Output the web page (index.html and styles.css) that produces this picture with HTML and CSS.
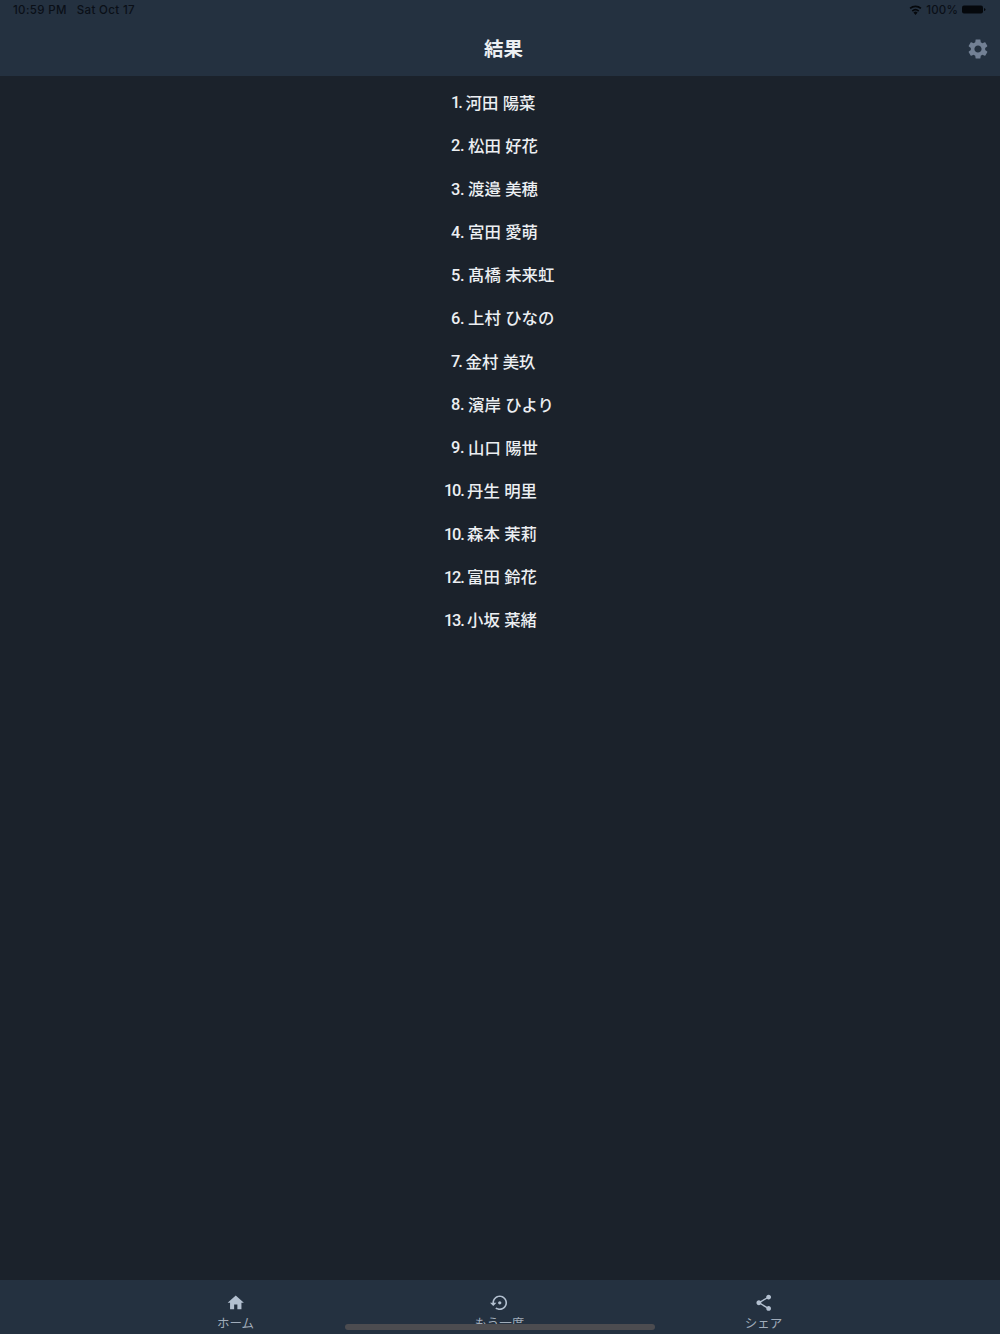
FILE: index.html
```
<!DOCTYPE html>
<html lang="ja">
<head>
<meta charset="utf-8">
<title>結果</title>
<link rel="stylesheet" href="styles.css">
</head>
<body>
<div class="app">
  <header class="header">
    <div class="status">
      <span class="time">10:59 PM</span><span class="date">Sat Oct 17</span>
      <svg class="wifi" viewBox="0 0 24 18"><path d="M12 18l3.8-4.6a6 6 0 0 0-7.6 0zM5.1 9.7l2 2.3a7.8 7.8 0 0 1 9.8 0l2-2.3a10.9 10.9 0 0 0-13.8 0zM1 4.9l2.1 2.4a14 14 0 0 1 17.8 0L23 4.9a17.2 17.2 0 0 0-22 0z"/></svg>
      <span class="percent">100%</span>
      <svg class="battery" viewBox="0 0 24 9"><rect x="0" y="0.5" width="21" height="8" rx="2"/><path d="M22 3v3q1.5-.5 1.5-1.5T22 3z"/></svg>
    </div>
    <div class="toolbar">
      <h1 class="title">結果</h1>
      <svg class="gear" viewBox="0 0 24 24"><path d="M19.14 12.94c.04-.3.06-.61.06-.94 0-.32-.02-.64-.07-.94l2.03-1.58c.18-.14.23-.41.12-.61l-1.92-3.32c-.12-.22-.37-.29-.59-.22l-2.39.96c-.5-.38-1.03-.7-1.62-.94l-.36-2.54c-.04-.24-.24-.41-.48-.41h-3.84c-.24 0-.43.17-.47.41l-.36 2.54c-.59.24-1.13.57-1.62.94l-2.39-.96c-.22-.08-.47 0-.59.22L2.74 8.87c-.12.21-.08.47.12.61l2.03 1.58c-.05.3-.09.63-.09.94s.02.64.07.94l-2.03 1.58c-.18.14-.23.41-.12.61l1.92 3.32c.12.22.37.29.59.22l2.39-.96c.5.38 1.03.7 1.62.94l.36 2.54c.05.24.24.41.48.41h3.84c.24 0 .44-.17.47-.41l.36-2.54c.59-.24 1.13-.56 1.62-.94l2.39.96c.22.08.47 0 .59-.22l1.92-3.32c.12-.22.07-.47-.12-.61l-2.01-1.58zM12 15.6c-1.98 0-3.6-1.62-3.6-3.6s1.62-3.6 3.6-3.6 3.6 1.62 3.6 3.6-1.62 3.6-3.6 3.6z"/></svg>
    </div>
  </header>
  <main class="results">
    <div class="row"><span class="rank narrow">1.</span><span>河田 陽菜</span></div>
    <div class="row"><span class="rank">2.</span><span>松田 好花</span></div>
    <div class="row"><span class="rank">3.</span><span>渡邉 美穂</span></div>
    <div class="row"><span class="rank">4.</span><span>宮田 愛萌</span></div>
    <div class="row"><span class="rank">5.</span><span>髙橋 未来虹</span></div>
    <div class="row"><span class="rank">6.</span><span>上村 ひなの</span></div>
    <div class="row"><span class="rank narrow">7.</span><span>金村 美玖</span></div>
    <div class="row"><span class="rank">8.</span><span>濱岸 ひより</span></div>
    <div class="row"><span class="rank">9.</span><span>山口 陽世</span></div>
    <div class="row"><span class="rank double">10.</span><span>丹生 明里</span></div>
    <div class="row"><span class="rank double">10.</span><span>森本 茉莉</span></div>
    <div class="row"><span class="rank double">12.</span><span>富田 鈴花</span></div>
    <div class="row"><span class="rank double">13.</span><span>小坂 菜緒</span></div>
  </main>
  <nav class="nav">
    <div class="tab"><svg class="icon" viewBox="0 0 24 24"><path d="M10 20v-6h4v6h5v-8h3L12 3 2 12h3v8z"/></svg><span>ホーム</span></div>
    <div class="tab"><svg class="icon" viewBox="0 0 24 24"><path d="M14 12c0-1.1-.9-2-2-2s-2 .9-2 2 .9 2 2 2 2-.9 2-2zm-2-9c-4.97 0-9 4.03-9 9H0l4 4 4-4H5c0-3.87 3.13-7 7-7s7 3.13 7 7-3.13 7-7 7c-1.51 0-2.91-.49-4.06-1.3l-1.42 1.44C8.04 20.3 9.94 21 12 21c4.97 0 9-4.03 9-9s-4.03-9-9-9z"/></svg><span>もう一度</span></div>
    <div class="tab"><svg class="icon" viewBox="0 0 24 24"><path d="M18 16.08c-.76 0-1.44.3-1.96.77L8.91 12.7c.05-.23.09-.46.09-.7s-.04-.47-.09-.7l7.05-4.11c.54.5 1.25.81 2.04.81 1.66 0 3-1.34 3-3s-1.34-3-3-3-3 1.34-3 3c0 .24.04.47.09.7L8.04 9.81C7.5 9.31 6.79 9 6 9c-1.66 0-3 1.34-3 3s1.34 3 3 3c.79 0 1.5-.31 2.04-.81l7.12 4.16c-.05.21-.08.43-.08.65 0 1.61 1.31 2.92 2.92 2.92s2.92-1.31 2.92-2.92-1.31-2.92-2.92-2.92z"/></svg><span>シェア</span></div>
    <div class="home-indicator"></div>
  </nav>
</div>
</body>
</html>
```
FILE: styles.css
```
* { box-sizing: border-box; }
body {
  margin: 0;
  background: #1b222b;
  color: #eceff2;
  font-family: Inter, "Noto Sans CJK JP", sans-serif;
}
.app { height: 1334px; display: flex; flex-direction: column; overflow: hidden; }
.header { height: 76px; background: #243140; flex: none; }
.status {
  height: 20px;
  padding: 0 14px 1px 13px;
  display: flex;
  align-items: center;
  color: #0a0f17;
  font-size: 11.5px;
  font-weight: 500;
  line-height: 18px;
  letter-spacing: .35px;
}
.status svg { fill: #05080c; }
.date { margin-left: 10px; }
.wifi { width: 13px; height: 10px; margin-left: auto; }
.percent { margin: 0 4px 0 4px; letter-spacing: .2px; }
.battery { width: 24px; height: 9px; }
.toolbar {
  height: 56px;
  padding: 1px 10px 0 41px;
  display: grid;
  grid-template-columns: 1fr 24px;
  align-items: center;
}
.title { margin: 0; padding-top: 1px; text-align: center; font-size: 19.5px; font-weight: 700; line-height: 28px; }
.gear { width: 24px; height: 24px; fill: #728094; }
.results { flex: 1; padding: 5.2px 0 0 444px; font-size: 16.4px; font-weight: 500; }
.row { height: 43.14px; display: flex; align-items: center; line-height: 24px; white-space: nowrap; }
.rank { width: 17px; margin-left: 7px; padding-top: 1px; font-family: Roboto, sans-serif; font-size: 16.4px; letter-spacing: -.2px; }
.narrow { width: 14.5px; letter-spacing: -2px; }
.double { width: 23px; margin-left: 0; letter-spacing: -1.2px; }
.nav {
  position: relative;
  height: 54px;
  flex: none;
  padding: 13px 104.5px 0 103.5px;
  background: #243140;
  display: grid;
  grid-template-columns: repeat(3, 1fr);
}
.tab {
  display: flex;
  flex-direction: column;
  align-items: center;
  color: #a0acba;
  font-size: 12.5px;
  line-height: 18px;
  gap: 2.5px;
}
.icon { width: 19.5px; height: 19.5px; fill: #b3c0d0; }
.home-indicator {
  position: absolute;
  left: 345px;
  bottom: 4px;
  width: 310px;
  height: 6px;
  border-radius: 3px;
  background: #4c4c50;
  box-shadow: 0 4px 0 #243140;
}
```
